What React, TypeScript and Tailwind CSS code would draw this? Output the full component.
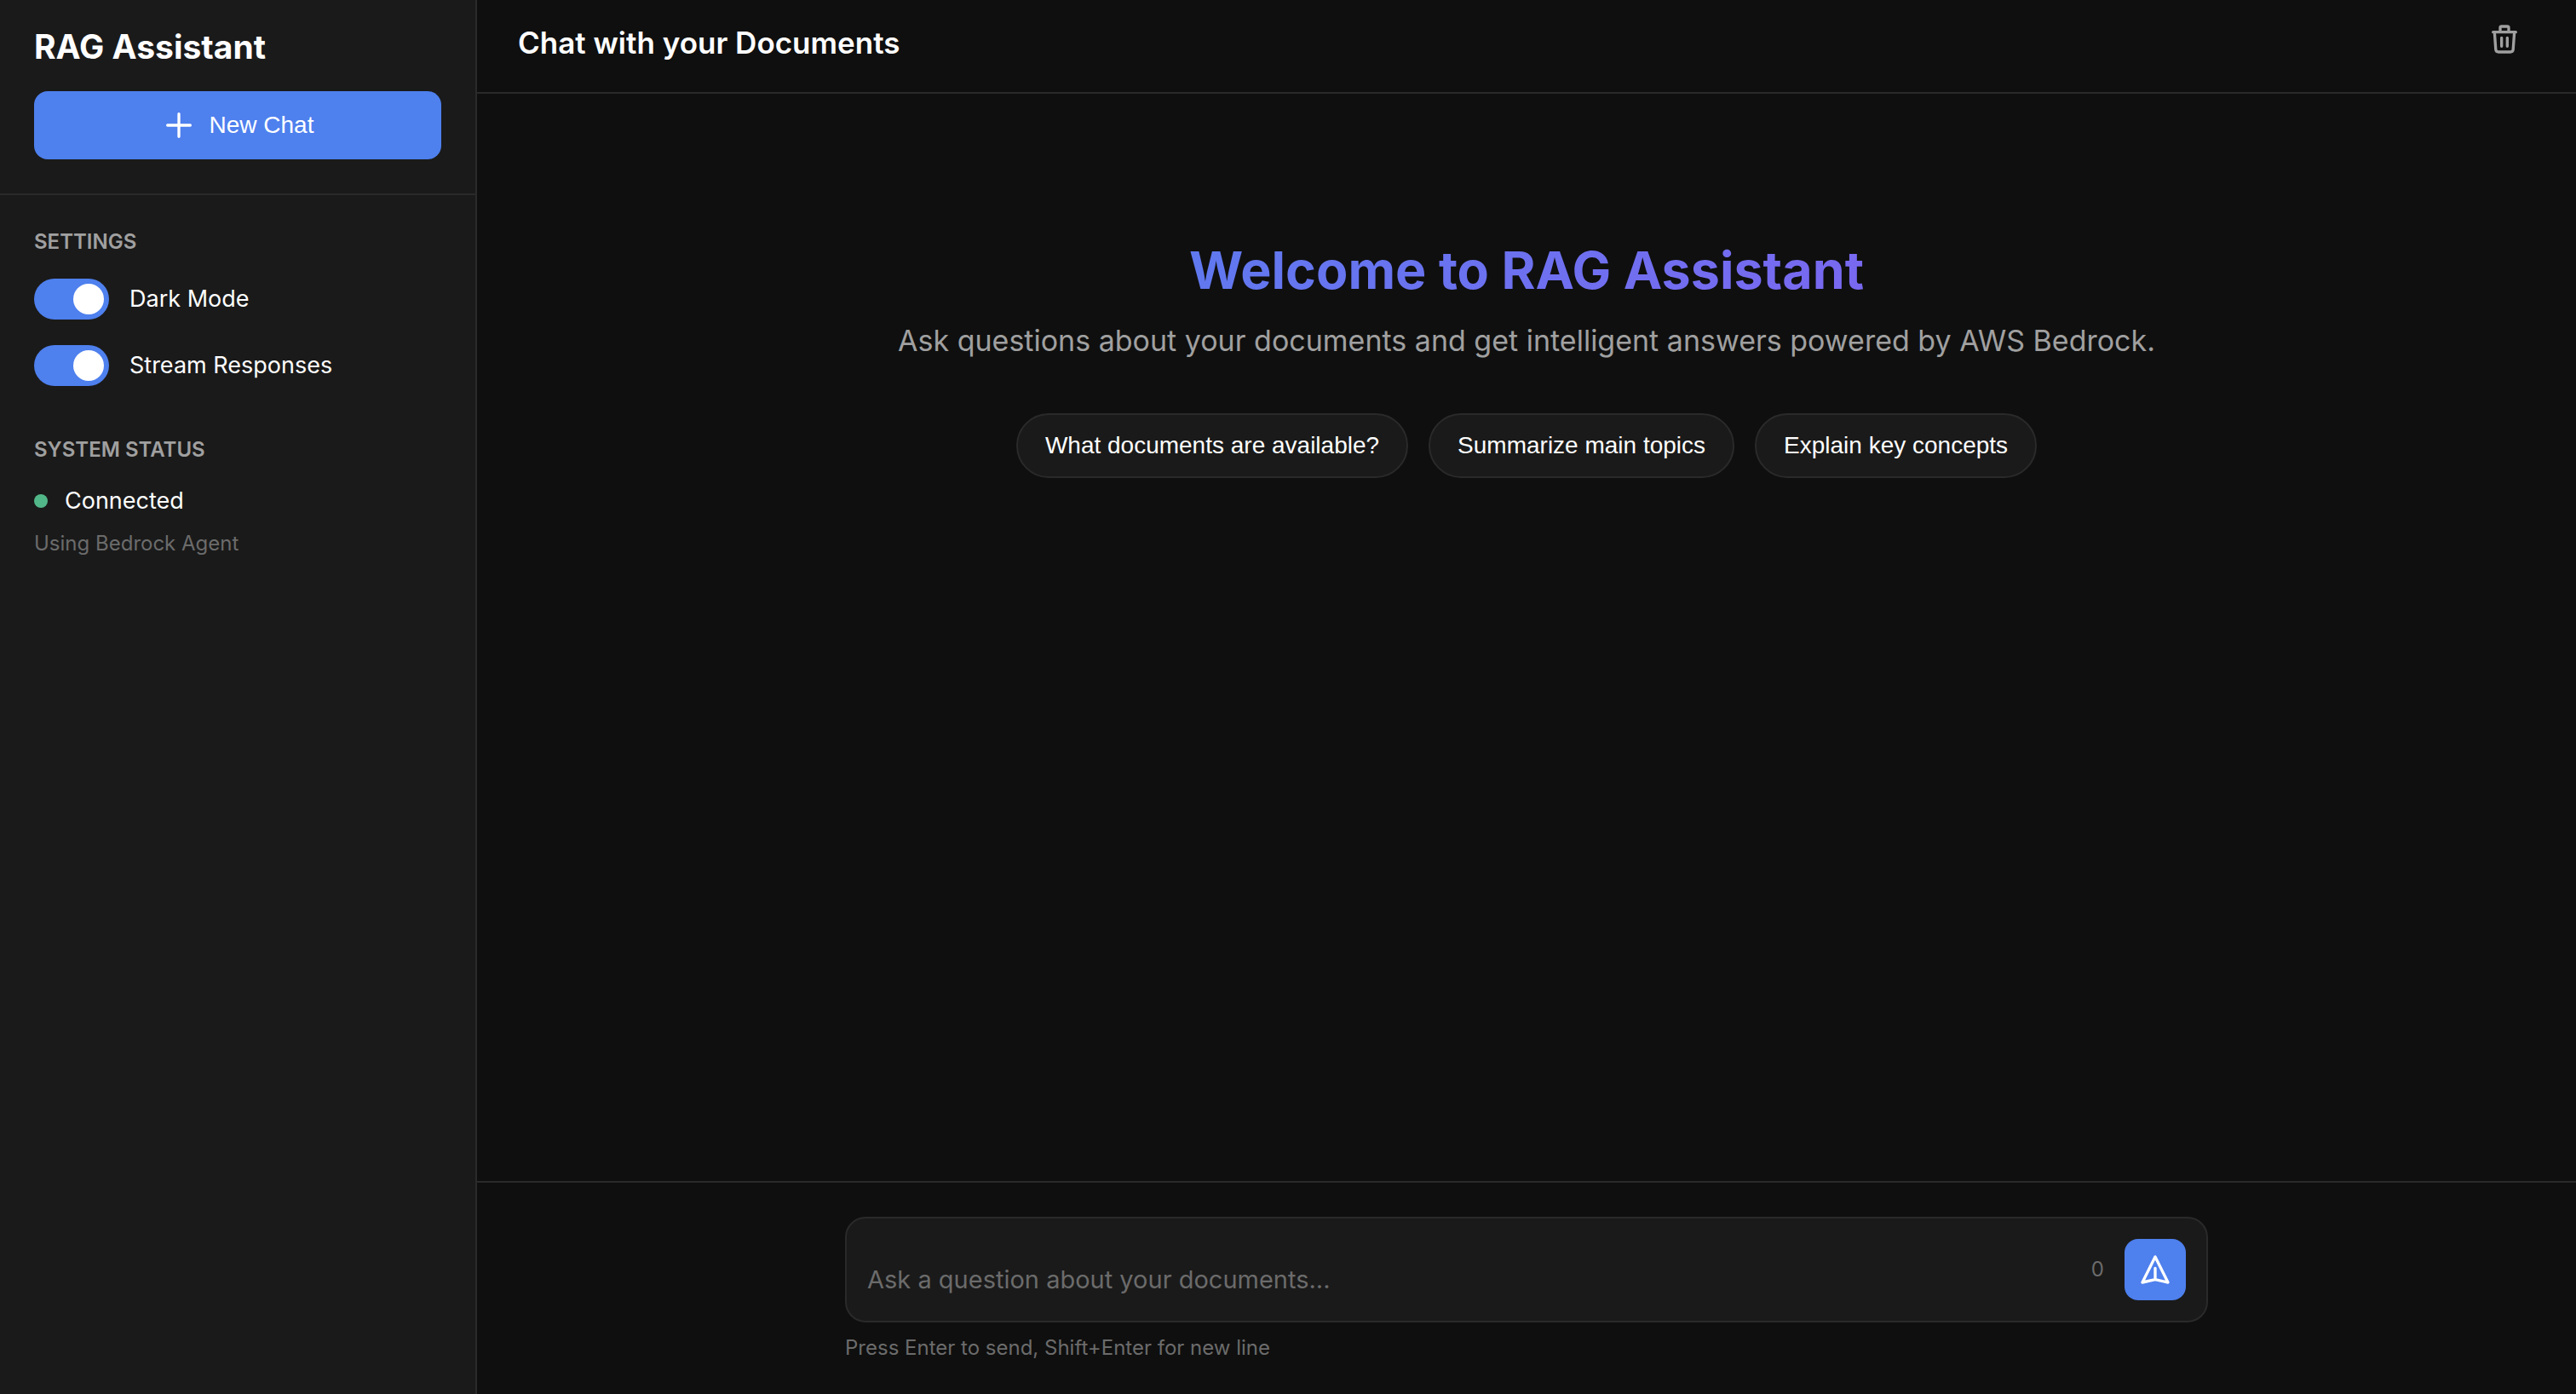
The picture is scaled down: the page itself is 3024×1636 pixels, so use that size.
import { useState } from "react";

type IconProps = { d: string };

function Icon({ d }: IconProps) {
  return (
    <svg
      className="size-10 shrink-0"
      viewBox="0 0 24 24"
      fill="none"
      stroke="currentColor"
      strokeWidth={2}
      strokeLinecap="round"
      strokeLinejoin="round"
      aria-hidden="true"
    >
      <path d={d} />
    </svg>
  );
}

const PLUS = "M12 4v16m8-8H4";
const SEND = "M12 19l9 2-9-18-9 18 9-2zm0 0v-8";
const TRASH =
  "M19 7l-.867 12.142A2 2 0 0116.138 21H7.862a2 2 0 01-1.995-1.858L5 7m5 4v6m4-6v6m1-10V4a1 1 0 00-1-1h-4a1 1 0 00-1 1v3M4 7h16";

const SUGGESTIONS = [
  "What documents are available?",
  "Summarize main topics",
  "Explain key concepts",
];

function Toggle({ label }: { label: string }) {
  const [on, setOn] = useState(true);
  return (
    <label className="flex cursor-pointer items-center gap-6">
      <input
        type="checkbox"
        role="switch"
        checked={on}
        onChange={(e) => setOn(e.target.checked)}
        className="flex h-12 w-[88px] shrink-0 cursor-pointer appearance-none items-center rounded-full bg-[#2a2a2a] px-[6px] before:size-9 before:rounded-full before:bg-white before:content-[''] checked:justify-end checked:bg-[#4e80ee]"
      />
      <span className="text-[27px] leading-[34px]">{label}</span>
    </label>
  );
}

function SectionTitle({ children }: { children: string }) {
  return (
    <h2 className="mb-7 text-[24px] leading-[30px] font-semibold text-[#a0a0a0] uppercase">
      {children}
    </h2>
  );
}

function Sidebar() {
  return (
    <aside className="flex w-[560px] shrink-0 flex-col border-r-2 border-[#2a2a2a] bg-[#1a1a1a]">
      <div className="border-b-2 border-[#2a2a2a] px-10 pt-7 pb-10">
        <h1 className="mb-[25px] text-[39px] leading-[54px] font-bold">RAG Assistant</h1>
        <button
          type="button"
          className="flex h-20 w-full items-center justify-center gap-4 rounded-2xl bg-[#4e80ee] font-['Liberation_Sans',sans-serif] text-[28px]"
        >
          <Icon d={PLUS} />
          New Chat
        </button>
      </div>
      <div className="flex flex-col gap-[60px] px-10 pt-10">
        <section>
          <SectionTitle>Settings</SectionTitle>
          <div className="flex flex-col gap-[30px]">
            <Toggle label="Dark Mode" />
            <Toggle label="Stream Responses" />
          </div>
        </section>
        <section>
          <SectionTitle>System Status</SectionTitle>
          <div className="flex items-center gap-5">
            <span className="size-4 rounded-full bg-[#52b788]" />
            <span className="text-[27px] leading-[34px]">Connected</span>
          </div>
          <p className="mt-[18px] text-[24px] leading-[30px] text-[#6b6b6b]">Using Bedrock Agent</p>
        </section>
      </div>
    </aside>
  );
}

function Composer() {
  const [text, setText] = useState("");
  return (
    <footer className="border-t-2 border-[#2a2a2a] p-10">
      <div className="mx-auto max-w-[1600px]">
        <div className="flex items-center gap-6 rounded-3xl border-2 border-[#2a2a2a] bg-[#1a1a1a] p-6">
          <textarea
            rows={1}
            value={text}
            onChange={(e) => setText(e.target.value)}
            aria-label="Message"
            placeholder="Ask a question about your documents..."
            className="h-12 min-w-0 flex-1 resize-none self-end overflow-hidden bg-transparent text-[29px] leading-[48px] outline-none placeholder:text-[#6b6b6b]"
          />
          <span className="text-[24px] leading-[30px] text-[#6b6b6b]">{text.length}</span>
          <button
            type="button"
            aria-label="Send message"
            className="flex size-[72px] items-center justify-center rounded-2xl bg-[#4e80ee]"
          >
            <Icon d={SEND} />
          </button>
        </div>
        <p className="mt-4 text-[24px] leading-[28px] text-[#6b6b6b]">
          Press Enter to send, Shift+Enter for new line
        </p>
      </div>
    </footer>
  );
}

export default function App() {
  return (
    <div className="flex min-h-screen bg-[#0f0f0f] font-['Inter',sans-serif] text-white">
      <Sidebar />
      <main className="flex min-w-0 flex-1 flex-col">
        <header className="flex items-start justify-between border-b-2 border-[#2a2a2a] px-12 pt-[10px] pb-[18px]">
          <h2 className="text-[35px] leading-[80px] font-semibold">Chat with your Documents</h2>
          <button
            type="button"
            aria-label="Clear chat"
            className="flex size-[72px] items-center justify-center text-[#a0a0a0]"
          >
            <Icon d={TRASH} />
          </button>
        </header>
        <section className="mx-auto flex w-full max-w-[1600px] flex-1 flex-col pt-[169px] text-center">
          <h2 className="mb-6 bg-linear-135 from-[#4e80ee] to-[#835ff1] bg-clip-text text-[61px] leading-[76px] font-bold text-transparent">
            Welcome to RAG Assistant
          </h2>
          <p className="mb-16 text-[34px] leading-[42px] text-[#a0a0a0]">
            Ask questions about your documents and get intelligent answers powered by AWS Bedrock.
          </p>
          <div className="flex flex-wrap justify-center gap-6">
            {SUGGESTIONS.map((s) => (
              <button
                key={s}
                type="button"
                className="h-[76px] rounded-full border-2 border-[#2a2a2a] bg-[#1a1a1a] px-8 font-['Liberation_Sans',sans-serif] text-[28px]"
              >
                {s}
              </button>
            ))}
          </div>
        </section>
        <Composer />
      </main>
    </div>
  );
}
